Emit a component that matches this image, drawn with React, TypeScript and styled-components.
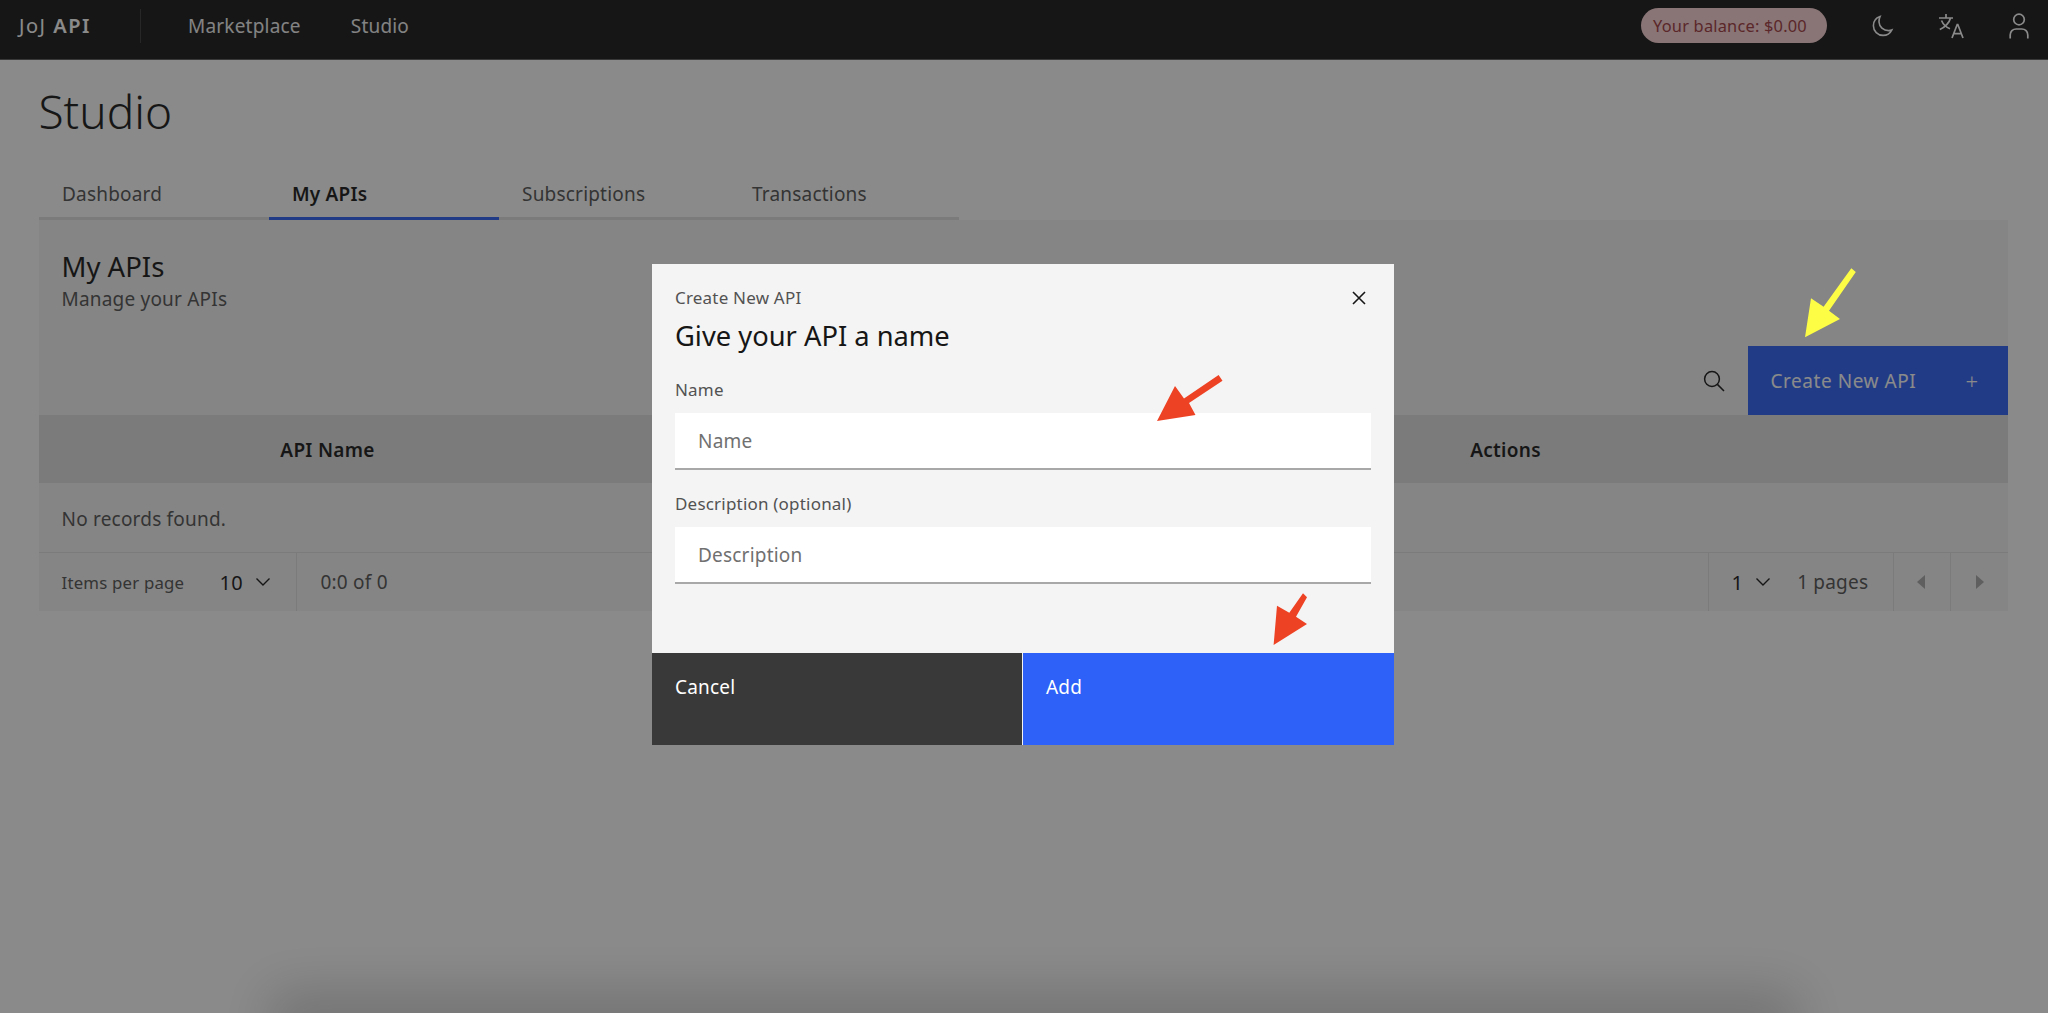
import React from "react";
import styled, { createGlobalStyle } from "styled-components";

const GlobalStyle = createGlobalStyle`
  * {
    box-sizing: border-box;
  }
  html,
  body {
    margin: 0;
    height: 100%;
    overflow: hidden;
    background: #ffffff;
  }
  body {
    font-family: "Noto Sans", "Open Sans", "Liberation Sans", sans-serif;
    font-size: 19px;
    letter-spacing: 0.2px;
    color: #161616;
  }
  input::placeholder {
    color: #707070;
    opacity: 1;
  }
`;

const ChevronDown = () => (
  <svg width="16" height="10" viewBox="0 0 16 10" fill="none" stroke="currentColor" strokeWidth="1.4">
    <path d="M1.5 1.5 8 8l6.5-6.5" />
  </svg>
);

const App = (): JSX.Element => {
  return (
    <>
      <GlobalStyle />
      <Header>
        <Brand>
          JoJ <b>API</b>
        </Brand>
        <HeaderDivider />
        <NavLink>Marketplace</NavLink>
        <NavLink>Studio</NavLink>
        <HeaderRight>
          <Balance>Your balance: $0.00</Balance>
          <HeaderIcon>
            <svg width="22" height="22" viewBox="0 0 22 22" fill="none" stroke="currentColor" strokeWidth="1.6">
              <path d="M8 1.6C3.9 3 1.4 6.6 1.4 10.8c0 5.4 4.3 9.6 9.7 9.6 3.7 0 7-2 8.6-5.3-1 .4-2 .5-3 .5C11.300 15.600 7.300 12 7 7c-.1-1.900.2-3.700 1-5.400z" />
            </svg>
          </HeaderIcon>
          <HeaderIcon>
            <svg width="26" height="26" viewBox="0 0 26 26" fill="none" stroke="currentColor" strokeWidth="1.7">
              <path d="M1 5h14M8 1v4M12.500 5C11.500 9.500 7 14.500 1.800 16.500M3.500 7.500c1.600 3.800 5.200 7 8.500 8.200" />
              <path d="M14 25l5.200-13.500h.6L25 25M15.800 20.700h7.400" />
            </svg>
          </HeaderIcon>
          <HeaderIcon>
            <svg width="20" height="26" viewBox="0 0 20 26" fill="none" stroke="currentColor" strokeWidth="1.7">
              <circle cx="10" cy="6.500" r="5.300" />
              <path d="M1.200 25.500v-3.500c0-3.400 2.600-6 6-6h5.600c3.400 0 6 2.600 6 6v3.500" />
            </svg>
          </HeaderIcon>
        </HeaderRight>
      </Header>

      <Main>
        <PageTitle>Studio</PageTitle>
        <Tabs>
          <Tab>Dashboard</Tab>
          <Tab active>My APIs</Tab>
          <Tab>Subscriptions</Tab>
          <Tab>Transactions</Tab>
        </Tabs>

        <Panel>
          <PanelHead>
            <PanelTitle>My APIs</PanelTitle>
            <PanelSubtitle>Manage your APIs</PanelSubtitle>
          </PanelHead>
          <Toolbar>
            <SearchButton>
              <svg width="22" height="22" viewBox="0 0 22 22" fill="none" stroke="currentColor" strokeWidth="1.5">
                <circle cx="9" cy="9" r="7.400" />
                <path d="M14.400 14.400 21 21" />
              </svg>
            </SearchButton>
            <CreateButton>
              Create New API
              <PlusMark>+</PlusMark>
            </CreateButton>
          </Toolbar>
          <TableHead>
            <HeadCell>API Name</HeadCell>
            <span />
            <HeadCell>Actions</HeadCell>
          </TableHead>
          <EmptyRow>No records found.</EmptyRow>
          <Pagination>
            <PageSizeGroup>
              <SmallLabel>Items per page</SmallLabel>
              <SelectValue>
                10
                <ChevronDown />
              </SelectValue>
            </PageSizeGroup>
            <RangeText>0:0 of 0</RangeText>
            <PagerGroup>
              <SelectValue>
                1
                <ChevronDown />
              </SelectValue>
              <PagesText>1 pages</PagesText>
            </PagerGroup>
            <PagerButton>
              <svg width="9" height="14" viewBox="0 0 9 14" fill="currentColor">
                <path d="M8 0v14L0 7z" />
              </svg>
            </PagerButton>
            <PagerButton>
              <svg width="9" height="14" viewBox="0 0 9 14" fill="currentColor">
                <path d="M1 0v14l8-7z" />
              </svg>
            </PagerButton>
          </Pagination>
        </Panel>
      </Main>

      <BottomShadow />

      <Overlay>
        <Modal>
          <ModalBody>
            <ModalHeading>
              <div>
                <ModalEyebrow>Create New API</ModalEyebrow>
                <ModalTitle>Give your API a name</ModalTitle>
              </div>
              <CloseButton>
                <svg width="14" height="14" viewBox="0 0 14 14" fill="none" stroke="currentColor" strokeWidth="1.6">
                  <path d="M1 1l12 12M13 1 1 13" />
                </svg>
              </CloseButton>
            </ModalHeading>
            <Field>
              <FieldLabel htmlFor="api-name">Name</FieldLabel>
              <TextInput id="api-name" placeholder="Name" />
            </Field>
            <Field>
              <FieldLabel htmlFor="api-description">Description (optional)</FieldLabel>
              <TextInput id="api-description" placeholder="Description" />
            </Field>
          </ModalBody>
          <ModalFooter>
            <FooterButton>Cancel</FooterButton>
            <FooterButton primary>Add</FooterButton>
          </ModalFooter>
        </Modal>
      </Overlay>

      <Annotations viewBox="0 0 2048 1013">
        <polygon
          fill="#ee4224"
          points="1157,421 1175,386 1184,398.500 1218.600,375 1222.500,380.700 1189,403 1195.500,415"
        />
        <polygon
          fill="#ee4224"
          points="1273.600,645 1277,605.700 1289.300,612.700 1303,593.300 1307,597.300 1296,616.700 1307,624"
        />
        <polygon
          fill="#fdfd46"
          points="1805,337.300 1811,298.300 1823.600,306.700 1851.300,268.300 1855.800,272 1829,310.700 1840,319"
        />
      </Annotations>
    </>
  );
};

export default App;

const Header = styled.header`
  display: flex;
  align-items: center;
  height: 60px;
  padding: 0 0 8px 19px;
  background: #161616;
  border-bottom: 1px solid #5a5a5a;
  color: #ffffff;
`;

const Brand = styled.div`
  width: 121px;
  font-size: 20px;
  letter-spacing: 1.5px;
  white-space: nowrap;

  b {
    font-weight: 600;
  }
`;

const HeaderDivider = styled.div`
  width: 1px;
  height: 34px;
  margin-right: 47px;
  background: #393939;
`;

const NavLink = styled.a`
  margin-right: 50px;
  color: #f0f0f0;
`;

const HeaderRight = styled.div`
  display: flex;
  align-items: center;
  margin-left: auto;
  margin-right: -5px;
`;

const Balance = styled.div`
  display: flex;
  align-items: center;
  justify-content: center;
  width: 186px;
  height: 35px;
  margin-right: 22px;
  padding-right: 8px;
  border-radius: 18px;
  background: #fdd3d6;
  color: #a0383d;
  font-size: 16.4px;
  white-space: nowrap;
`;

const HeaderIcon = styled.div`
  display: flex;
  align-items: center;
  justify-content: center;
  width: 68px;
  height: 48px;
  color: #ffffff;
`;

const Main = styled.main`
  padding: 0 40.5px 0 38.5px;
`;

const PageTitle = styled.h1`
  margin: 0;
  padding: 19px 0 0;
  height: 118px;
  font-size: 46px;
  line-height: 64px;
  font-weight: 300;
  letter-spacing: 0;
  color: #161616;
`;

const Tabs = styled.div`
  display: flex;
  height: 42px;
`;

const Tab = styled.div<{ active?: boolean }>`
  width: 230px;
  padding: 3px 0 0 23.5px;
  border-bottom: 3px solid ${(props) => (props.active ? "#2d61f8" : "#e0e0e0")};
  color: ${(props) => (props.active ? "#161616" : "#525252")};
  font-weight: ${(props) => (props.active ? 600 : 400)};
`;

const Panel = styled.section`
  background: #f4f4f4;
`;

const PanelHead = styled.div`
  height: 126px;
  padding: 30px 23px 0;
`;

const PanelTitle = styled.h2`
  margin: 0;
  font-size: 27.5px;
  line-height: 34px;
  font-weight: 400;
  letter-spacing: 0;
`;

const PanelSubtitle = styled.p`
  margin: 2px 0 0;
  line-height: 26px;
  color: #525252;
`;

const Toolbar = styled.div`
  display: flex;
  justify-content: flex-end;
  height: 69px;
`;

const SearchButton = styled.div`
  display: flex;
  align-items: center;
  justify-content: center;
  width: 68px;
  color: #161616;
`;

const CreateButton = styled.div`
  display: flex;
  align-items: center;
  justify-content: space-between;
  width: 260px;
  padding: 0 29px 0 23px;
  background: #2d61f8;
  color: #ffffff;
  letter-spacing: 0.55px;
`;

const PlusMark = styled.span`
  font-size: 22px;
  font-weight: 300;
`;

const TableHead = styled.div`
  display: grid;
  grid-template-columns: 578px 387px 1fr;
  align-items: center;
  height: 68px;
  padding-top: 2px;
  background: #e0e0e0;
`;

const HeadCell = styled.div`
  text-align: center;
  font-weight: 600;
  letter-spacing: 0.3px;
`;

const EmptyRow = styled.div`
  display: flex;
  align-items: center;
  height: 70px;
  padding: 2px 23px 0;
  color: #525252;
  border-bottom: 1px solid #e0e0e0;
`;

const Pagination = styled.div`
  display: flex;
  align-items: stretch;
  height: 58px;
  color: #525252;
`;

const PageSizeGroup = styled.div`
  display: flex;
  align-items: center;
  width: 258px;
  padding-left: 23px;
  border-right: 1px solid #e0e0e0;
`;

const SmallLabel = styled.span`
  width: 158px;
  font-size: 16.8px;
`;

const SelectValue = styled.span`
  display: flex;
  align-items: center;
  gap: 12px;
  color: #161616;
  font-size: 20px;
`;

const RangeText = styled.span`
  display: flex;
  align-items: center;
  padding-left: 24px;
  margin-right: auto;
`;

const PagerGroup = styled.div`
  display: flex;
  align-items: center;
  width: 185px;
  padding-left: 23px;
  border-left: 1px solid #e0e0e0;
`;

const PagesText = styled.span`
  margin-left: 26px;
`;

const PagerButton = styled.div`
  display: flex;
  align-items: center;
  justify-content: center;
  width: 57.5px;
  border-left: 1px solid #e0e0e0;
  color: #a8a8a8;
`;

const BottomShadow = styled.div`
  position: fixed;
  left: 270px;
  right: 250px;
  bottom: -40px;
  height: 62px;
  background: #161616;
  opacity: 0.2;
  filter: blur(26px);
`;

const Overlay = styled.div`
  position: fixed;
  inset: 0;
  display: flex;
  justify-content: center;
  align-items: flex-start;
  padding: 264px 0 0 0;
  background: rgba(22, 22, 22, 0.5);
`;

const Modal = styled.div`
  display: flex;
  flex-direction: column;
  width: 742px;
  height: 481px;
  margin-left: -2px;
  background: #f4f4f4;
`;

const ModalBody = styled.div`
  flex: 1;
  padding: 21px 23px 0;
`;

const ModalHeading = styled.div`
  display: flex;
  justify-content: space-between;
  margin-bottom: 25px;
`;

const ModalEyebrow = styled.div`
  font-size: 17px;
  line-height: 26px;
  color: #525252;
`;

const ModalTitle = styled.h3`
  margin: 7px 0 0;
  font-size: 27.3px;
  line-height: 36px;
  font-weight: 400;
  letter-spacing: 0;
`;

const CloseButton = styled.div`
  display: flex;
  height: 26px;
  align-items: center;
  margin-right: 5px;
  color: #161616;
`;

const Field = styled.div`
  margin-bottom: 23px;
`;

const FieldLabel = styled.label`
  display: block;
  margin-bottom: 12px;
  font-size: 17px;
  line-height: 22px;
  color: #525252;
`;

const TextInput = styled.input`
  display: block;
  width: 100%;
  height: 57px;
  padding: 0 23px;
  border: 0;
  border-bottom: 2px solid #a8a8a8;
  background: #ffffff;
  font: inherit;
  letter-spacing: 0.2px;
`;

const ModalFooter = styled.div`
  display: grid;
  grid-template-columns: 370px 1fr;
  gap: 1px;
  height: 92px;
`;

const FooterButton = styled.div<{ primary?: boolean }>`
  padding: 21px 23px 0;
  background: ${(props) => (props.primary ? "#2d61f8" : "#393939")};
  color: #ffffff;
`;

const Annotations = styled.svg`
  position: fixed;
  inset: 0;
  width: 2048px;
  height: 1013px;
  pointer-events: none;
`;
